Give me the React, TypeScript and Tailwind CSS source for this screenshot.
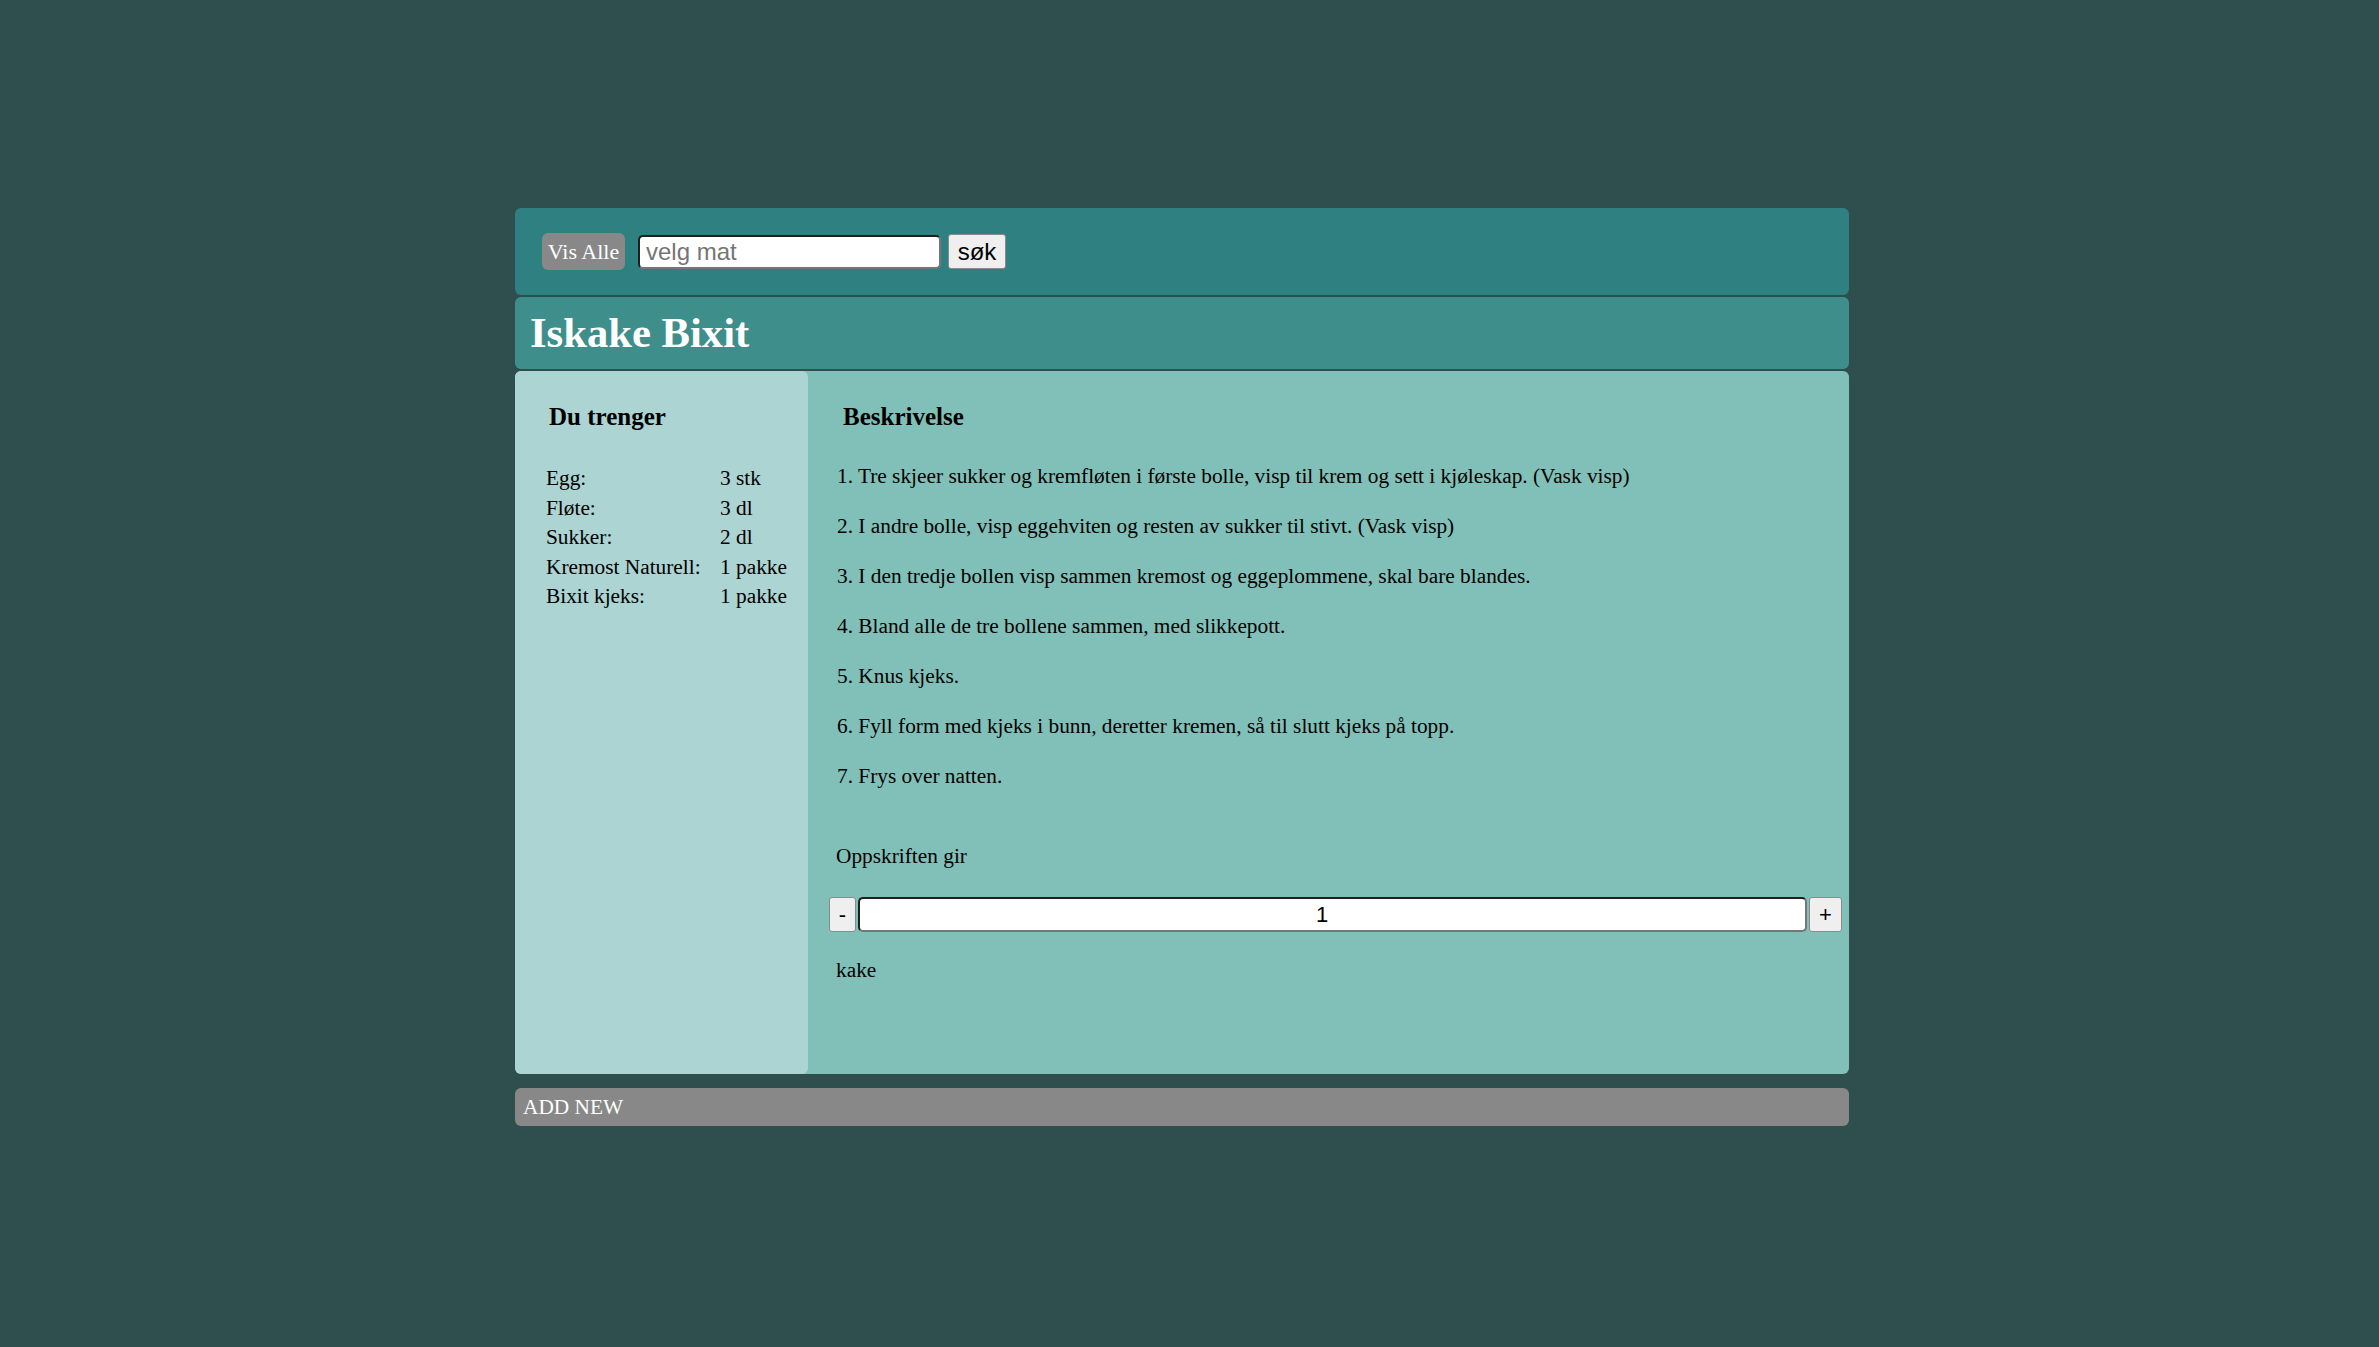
import { useState } from "react";

const ingredients = [
  { name: "Egg:", amount: "3 stk" },
  { name: "Fløte:", amount: "3 dl" },
  { name: "Sukker:", amount: "2 dl" },
  { name: "Kremost Naturell:", amount: "1 pakke" },
  { name: "Bixit kjeks:", amount: "1 pakke" },
];

const steps = [
  "1. Tre skjeer sukker og kremfløten i første bolle, visp til krem og sett i kjøleskap. (Vask visp)",
  "2. I andre bolle, visp eggehviten og resten av sukker til stivt. (Vask visp)",
  "3. I den tredje bollen visp sammen kremost og eggeplommene, skal bare blandes.",
  "4. Bland alle de tre bollene sammen, med slikkepott.",
  "5. Knus kjeks.",
  "6. Fyll form med kjeks i bunn, deretter kremen, så til slutt kjeks på topp.",
  "7. Frys over natten.",
];

export default function App() {
  const [search, setSearch] = useState("");
  const [portions, setPortions] = useState(1);

  return (
    <div className="min-h-screen bg-[#2f4f4f] pt-[208px] pb-[100px] font-['Liberation_Serif',serif] text-black">
      <div className="ml-[515px] w-[1334px]">
        <div className="flex h-[87px] items-center rounded-md bg-[#2f8080] pl-[27px]">
          <button
            type="button"
            className="h-[37px] w-[83px] rounded-[6px] bg-[#888888] text-[22px] leading-none text-white"
          >
            Vis Alle
          </button>
          <input
            type="text"
            placeholder="velg mat"
            value={search}
            onChange={(e) => setSearch(e.target.value)}
            className="ml-[13px] h-[34px] w-[303px] rounded-[5px] border-2 border-t-[#1f1f1f] border-l-[#1f1f1f] border-r-[#767676] border-b-[#767676] bg-white px-[6px] font-['Liberation_Sans',sans-serif] text-[24px] leading-none text-black placeholder-[#757575] outline-none"
          />
          <button
            type="button"
            className="ml-[7px] h-[35px] w-[58px] rounded-[3px] border border-[#8a8a8a] bg-[#efefef] font-['Liberation_Sans',sans-serif] text-[24px] leading-none"
          >
            søk
          </button>
        </div>

        <div className="mt-[2px] flex h-[72px] items-center rounded-md bg-[#3e8e8c] pl-[15px]">
          <h1 className="text-[42.67px] font-bold leading-none text-white">Iskake Bixit</h1>
        </div>

        <div className="mt-[2px] flex h-[703px] rounded-md bg-[#80c0b8]">
          <div className="w-[293px] shrink-0 rounded-md bg-[#acd4d2] pt-[31px]">
            <h2 className="pl-[34px] text-[25px] font-bold leading-[30px]">Du trenger</h2>
            <div className="mt-[32px] grid grid-cols-[174px_auto] pl-[31px] text-[21.33px] leading-[29.5px]">
              {ingredients.map((i) => (
                <div key={i.name} className="contents">
                  <span>{i.name}</span>
                  <span>{i.amount}</span>
                </div>
              ))}
            </div>
          </div>

          <div className="flex-1 pt-[31px]">
            <h2 className="pl-[35px] text-[25px] font-bold leading-[30px]">Beskrivelse</h2>
            <div className="mt-[31px] flex flex-col gap-[23px] pl-[29px] text-[21.33px] leading-[27px]">
              {steps.map((s) => (
                <p key={s}>{s}</p>
              ))}
            </div>
            <p className="mt-[53px] pl-[28px] text-[21.33px] leading-[27px]">Oppskriften gir</p>
            <div className="mt-[27px] ml-[21px] mr-[7px] flex h-[35px] items-stretch gap-[2px]">
              <button
                type="button"
                onClick={() => setPortions((p) => Math.max(1, p - 1))}
                className="w-[27px] rounded-[3px] border border-[#8a8a8a] bg-[#efefef] font-['Liberation_Sans',sans-serif] text-[22px] leading-none"
              >
                -
              </button>
              <input
                type="text"
                value={portions}
                readOnly
                className="min-w-0 flex-1 rounded-[5px] border-2 border-t-[#1f1f1f] border-l-[#1f1f1f] border-r-[#767676] border-b-[#767676] bg-white pr-[21px] text-center font-['Liberation_Sans',sans-serif] text-[22px] leading-none outline-none"
              />
              <button
                type="button"
                onClick={() => setPortions((p) => p + 1)}
                className="w-[33px] rounded-[3px] border border-[#8a8a8a] bg-[#efefef] font-['Liberation_Sans',sans-serif] text-[22px] leading-none"
              >
                +
              </button>
            </div>
            <p className="mt-[25px] pl-[28px] text-[21.33px] leading-[27px]">kake</p>
          </div>
        </div>

        <div className="mt-[14px] flex h-[38px] items-center rounded-md bg-[#888888] pl-[8px] pt-[2px]">
          <span className="text-[21.33px] leading-none text-white">ADD NEW</span>
        </div>
      </div>
    </div>
  );
}
